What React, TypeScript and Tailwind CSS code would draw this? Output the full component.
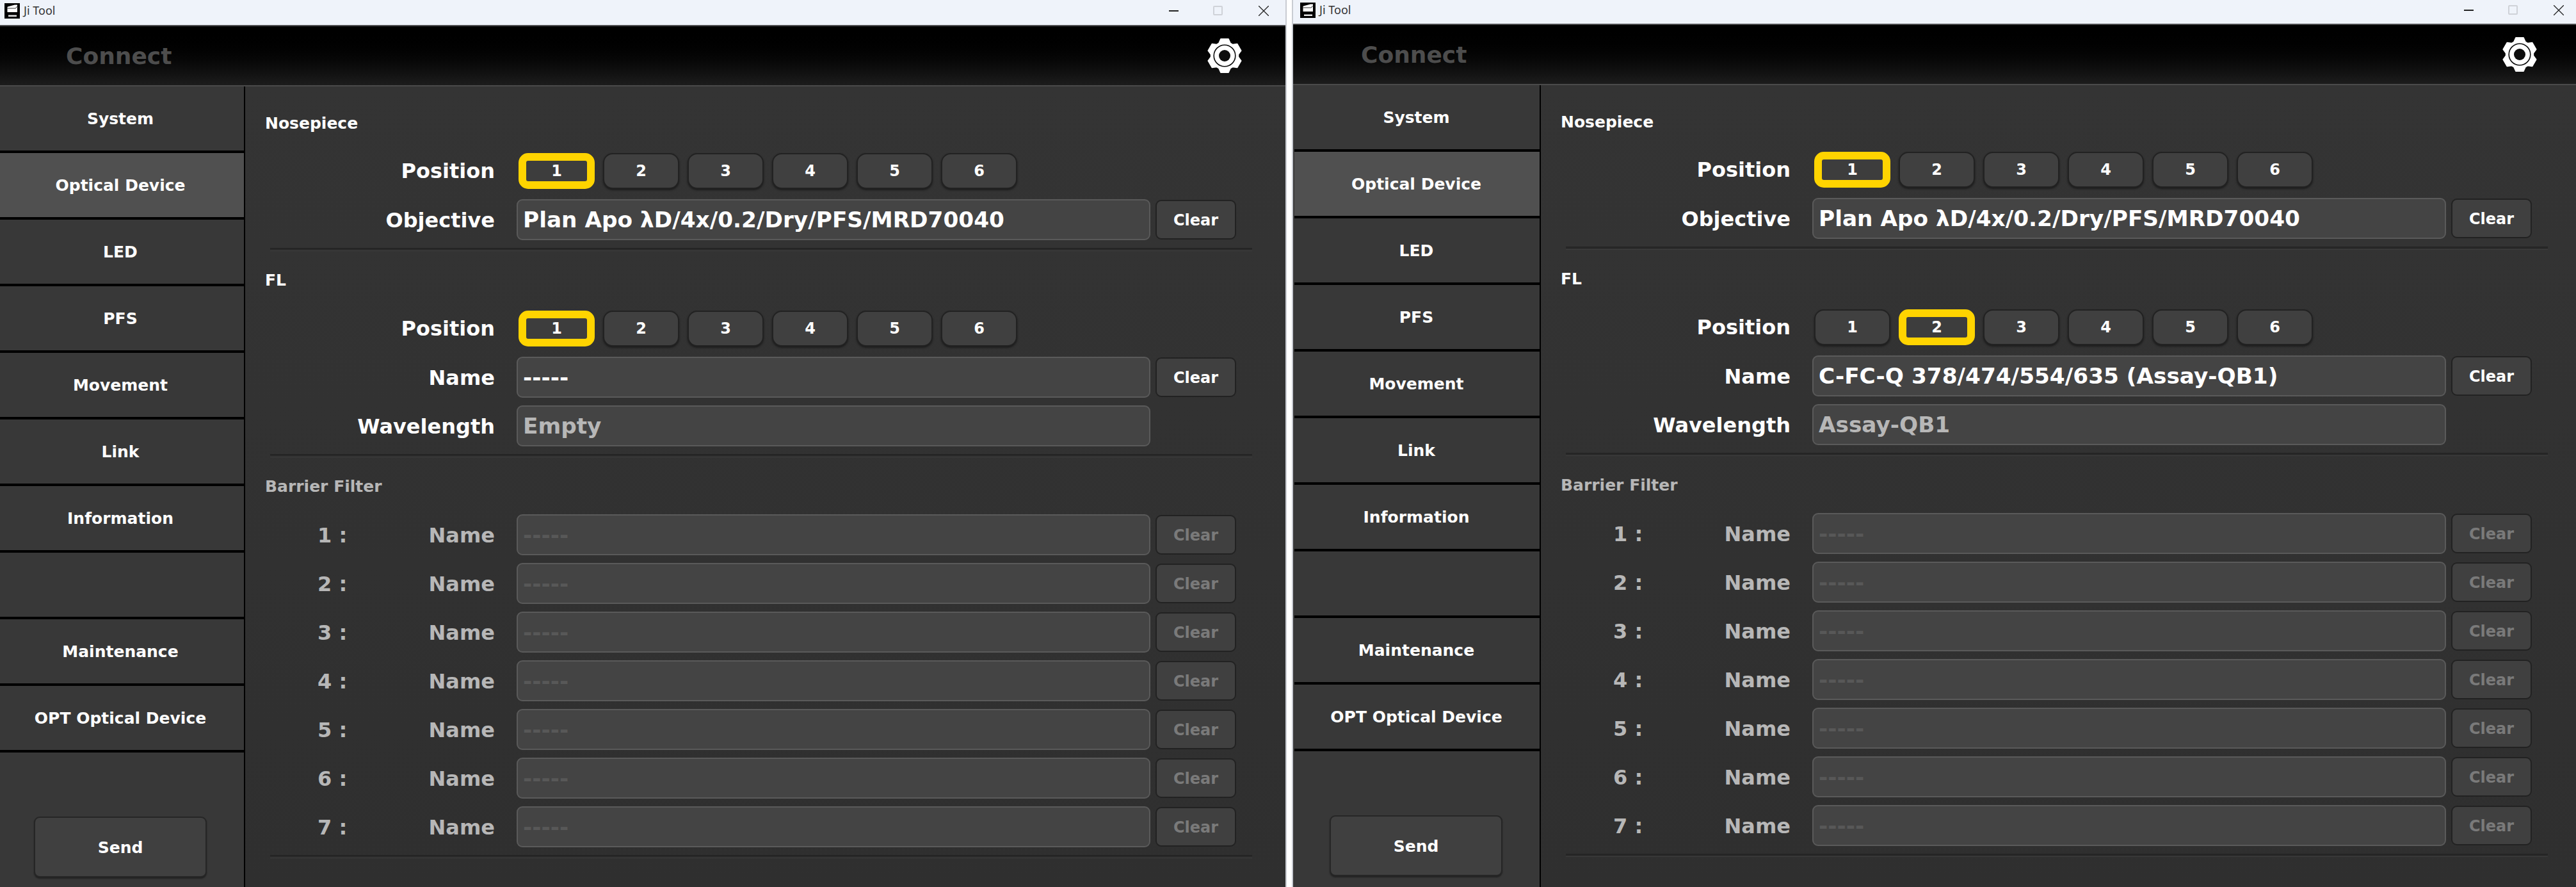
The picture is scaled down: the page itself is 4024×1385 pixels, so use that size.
const FONT = "font-['DejaVu_Sans',sans-serif] font-bold";

const NAV = ['System', 'Optical Device', 'LED', 'PFS', 'Movement', 'Link', 'Information', '', 'Maintenance', 'OPT Optical Device'];

function gearPath() {
  const cx = 27;
  const cy = 28;
  const pt = (r: number, deg: number) => {
    const a = (deg * Math.PI) / 180;
    return `${(cx + r * Math.cos(a)).toFixed(2)} ${(cy + r * Math.sin(a)).toFixed(2)}`;
  };
  let d = '';
  [-90, -30, 30, 90, 150, 210].forEach((t, i) => {
    d += `${i === 0 ? 'M' : 'L'}${pt(21.5, t - 25)} L${pt(27, t - 13)} L${pt(27, t + 13)} L${pt(21.5, t + 25)} `;
  });
  return d + 'Z';
}

function Gear() {
  return (
    <svg width="54" height="56" viewBox="0 0 54 56">
      <path d={gearPath()} fill="#fff" stroke="#fff" strokeWidth="1.500" strokeLinejoin="round" />
      <circle cx="27" cy="28" r="16.800" fill="none" stroke="#0b0b0b" strokeWidth="1.600" />
      <circle cx="27" cy="28" r="9" fill="#0d0d0d" />
    </svg>
  );
}

function AppIcon() {
  return (
    <svg width="24" height="24" viewBox="0 0 24 24" className="shrink-0">
      <rect width="24" height="24" fill="#000" />
      <path d="M5 5.500L16 2.500h4v11.500H4.500V6z" fill="#fff" />
      <path d="M4.500 8h13l2-3" fill="none" stroke="#000" strokeWidth="0.800" />
      <rect x="6" y="18.500" width="13" height="2.500" fill="#e4e4e4" />
    </svg>
  );
}

function TitleBar({ h, left, right }: { h: string; left: string; right: string }) {
  return (
    <div className={`${h} shrink-0 flex items-center pb-[6px] bg-[#eff3fa] border-b-2 border-[#4c4c4e]`}>
      <div className={`${left} flex-1 flex items-center gap-[6px]`}>
        <AppIcon />
        <span className="font-['Noto_Sans',sans-serif] font-normal text-[#333] text-[18px]">Ji Tool</span>
      </div>
      <div className={`${right} flex items-center`}>
        <div className="w-[15px] h-[2px] bg-[#222] mr-[54px]" />
        <div className="w-[15px] h-[15px] rounded-[2px] border-2 border-[#cfd2d8] mr-[56px]" />
        <svg width="16" height="16" viewBox="0 0 16 16" stroke="#222" strokeWidth="1.300">
          <path d="M0 0l16 16M16 0L0 16" />
        </svg>
      </div>
    </div>
  );
}

function Label({ children, dim }: { children: string; dim?: boolean }) {
  return (
    <div className={`w-[390px] text-right text-[32px] ${dim ? 'text-[#b7b7b7]' : 'text-white'}`}>{children}</div>
  );
}

function PosRow({ label, selected }: { label: string; selected: number }) {
  return (
    <div className="flex items-center h-[56px] mb-[16px]">
      <Label>{label}</Label>
      <div className="flex gap-[13px] ml-[37px]">
        {[1, 2, 3, 4, 5, 6].map((n) => (
          <div
            key={n}
            className={
              n === selected
                ? 'w-[119px] h-[56px] rounded-[15px] border-[12px] border-[#ffd400] bg-[#3d3d3d] text-white text-[24px] flex items-center justify-center'
                : 'w-[119px] h-[56px] rounded-[15px] border-[2px] border-[#222] bg-[#404040] shadow-[0_2px_3px_#1c1c1c] text-white text-[24px] flex items-center justify-center'
            }
          >
            {n}
          </div>
        ))}
      </div>
    </div>
  );
}

function Clear({ dim }: { dim?: boolean }) {
  return (
    <div
      className={`w-[126px] h-[62px] pt-[2px] rounded-[9px] border-[2px] border-[#222] bg-[#404040] flex items-center justify-center text-[24px] ${dim ? 'text-[#7a7a7a]' : 'text-white'}`}
    >
      Clear
    </div>
  );
}

function Field({
  label,
  value,
  tone = 'white',
  clear,
  clearDim,
  prefix,
}: {
  label: string;
  value: string;
  tone?: 'white' | 'gray' | 'dim';
  clear?: boolean;
  clearDim?: boolean;
  prefix?: string;
}) {
  const color = tone === 'white' ? 'text-white' : tone === 'gray' ? 'text-[#b7b7b7]' : 'text-[#585858]';
  return (
    <div className="flex items-center h-[64px] mb-[12px]">
      <div className="w-[390px] pt-[2px] relative shrink-0">
        {prefix && <span className="absolute left-[113px] top-[2px] text-[#b7b7b7] text-[32px]">{prefix}</span>}
        <Label dim={tone === 'dim'}>{label}</Label>
      </div>
      <div
        className={`w-[990px] h-[64px] ml-[34px] pt-[2px] shrink-0 rounded-[9px] border-[2px] border-[#5a5a5a] bg-[#444] flex items-center pl-[8px] text-[34.300px] ${color}`}
      >
        {value}
      </div>
      {clear && (
        <div className="ml-[8px] shrink-0">
          <Clear dim={clearDim} />
        </div>
      )}
    </div>
  );
}

function Divider() {
  return <div className="ml-[39px] w-[1534px] h-[5px] border-t-2 border-[#242424] border-b border-b-[#3f3f3f] bg-[#2c2c2c]" />;
}

function Heading({ children, dim, className }: { children: string; dim?: boolean; className: string }) {
  return (
    <div className={`ml-[31px] text-[25px] leading-[32px] ${dim ? 'text-[#b7b7b7]' : 'text-white'} ${className}`}>{children}</div>
  );
}

function Window({
  w,
  titleH,
  titleLeft,
  titleRight,
  headPad,
  sideW,
  itemCls,
  sendCls,
  flName,
  flWave,
  flPos,
}: {
  w: string;
  titleH: string;
  titleLeft: string;
  titleRight: string;
  headPad: string;
  sideW: string;
  itemCls: string;
  sendCls: string;
  flName: string;
  flWave: string;
  flPos: number;
}) {
  return (
    <div className={`${w} h-[1385px] shrink-0 flex flex-col overflow-hidden ${FONT}`}>
      <TitleBar h={titleH} left={titleLeft} right={titleRight} />
      <div className={`h-[94px] shrink-0 flex items-center justify-between bg-gradient-to-b from-black to-[#1c1c1c] border-b-2 border-[#4a4a4a] ${headPad}`}>
        <span className="text-[36px] text-[#4d4d4d] pt-[2px]">Connect</span>
        <Gear />
      </div>
      <div className="flex flex-1 min-h-0">
        <div className={`${sideW} shrink-0 bg-[#383838] flex flex-col`}>
          {NAV.map((n, i) => (
            <div
              key={i}
              className={`h-[104px] shrink-0 border-b-4 border-black pt-[2px] flex items-center justify-center text-[25px] text-white ${itemCls} ${i === 1 ? 'bg-[#505050]' : ''}`}
            >
              {n}
            </div>
          ))}
          <div className={`mt-[100px] w-[270px] h-[95px] pt-[2px] rounded-[9px] border-[2px] border-[#262626] bg-[#404040] flex items-center justify-center text-[25px] text-white shadow-[0_2px_2px_#222] ${sendCls}`}>
            Send
          </div>
        </div>
        <div className="flex-1 min-w-0 border-l-2 border-black bg-gradient-to-b from-[#343434] to-[#2f2f2f]">
          <Heading className="mt-[42px] mb-[30px]">Nosepiece</Heading>
          <PosRow label="Position" selected={1} />
          <Field label="Objective" value="Plan Apo λD/4x/0.2/Dry/PFS/MRD70040" clear />
          <Divider />
          <Heading className="mt-[30px] mb-[31px]">FL</Heading>
          <PosRow label="Position" selected={flPos} />
          <Field label="Name" value={flName} clear />
          <Field label="Wavelength" value={flWave} tone="gray" />
          <Divider />
          <Heading dim className="mt-[30px] mb-[27px]">Barrier Filter</Heading>
          {[1, 2, 3, 4, 5, 6, 7].map((n) => (
            <Field key={n} label="Name" value="-----" tone="dim" clear clearDim prefix={`${n} :`} />
          ))}
          <Divider />
        </div>
      </div>
    </div>
  );
}

export default function App() {
  return (
    <div className="w-[4024px] h-[1385px] bg-white flex overflow-hidden">
      <Window
        w="w-[2008px]"
        titleH="h-[41px]"
        titleLeft="pl-[7px]"
        titleRight="pr-[26px]"
        headPad="pl-[103px] pr-[68px]"
        sideW="w-[381px]"
        itemCls="pr-[5px]"
        sendCls="ml-[53px]"
        flName="-----"
        flWave="Empty"
        flPos={1}
      />
      <div className="w-[2px] shrink-0 bg-[#c9ccd2]" />
      <div className="w-[8px] shrink-0" />
      <div className="w-[2px] shrink-0 bg-[#c9ccd2]" />
      <Window
        w="w-[2004px]"
        titleH="h-[39px]"
        titleLeft="pl-[11px]"
        titleRight="pr-[19px]"
        headPad="pl-[106px] pr-[61px]"
        sideW="w-[385px]"
        itemCls="ml-[2px] pr-[2px]"
        sendCls="ml-[57px]"
        flName="C-FC-Q 378/474/554/635 (Assay-QB1)"
        flWave="Assay-QB1"
        flPos={2}
      />
    </div>
  );
}
